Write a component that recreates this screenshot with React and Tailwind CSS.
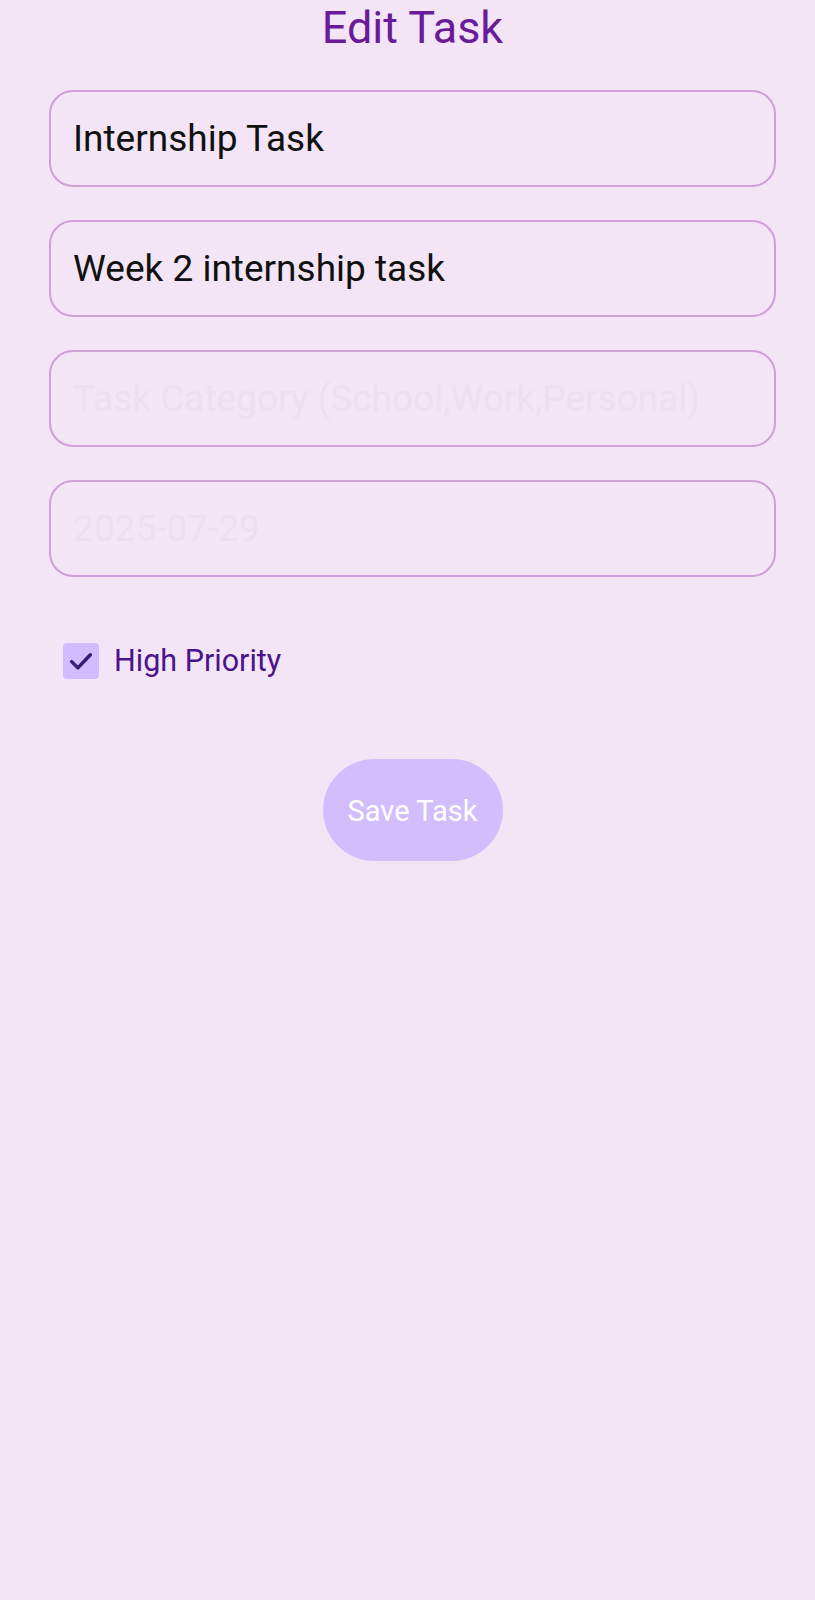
import React from "react";

export default function App() {
  const font = { fontFamily: "Roboto, 'Noto Sans', sans-serif" };
  return (
    <div className="min-h-[1600px] w-full bg-[#f3e5f5]" style={font}>
      <div className="flex flex-col pl-[49px] pr-[39px]">
        <h1 className="mt-[6px] text-center text-[45px] leading-[44px] text-[#6a1b9a]">Edit Task</h1>
        <div className="mt-[40px] flex flex-col gap-[33px]">
          <div className="flex h-[97px] items-center rounded-[24px] border-2 border-[#cf9fd8] px-[22px] text-[37px] text-[#111111]">
            Internship Task
          </div>
          <div className="flex h-[97px] items-center rounded-[24px] border-2 border-[#cf9fd8] px-[22px] text-[37px] text-[#111111]">
            Week 2 internship task
          </div>
          <div className="flex h-[97px] items-center rounded-[24px] border-2 border-[#cf9fd8] px-[22px] text-[37px] text-[#ecdff0] whitespace-nowrap overflow-hidden">
            Task Category (School,Work,Personal)
          </div>
          <div className="flex h-[97px] items-center rounded-[24px] border-2 border-[#cf9fd8] px-[22px] text-[37px] text-[#ecdff0]">
            2025-07-29
          </div>
        </div>
        <div className="mt-[66px] flex items-center gap-[15px] pl-[14px]">
          <div className="flex h-[36px] w-[36px] items-center justify-center rounded-[4px] bg-[#d0bcff]">
            <svg width="30" height="30" viewBox="0 0 24 24" fill="none">
              <path d="M4.5 12.5 L9.5 17.5 L19.5 7" stroke="#381e72" strokeWidth="2.8" strokeLinecap="round" strokeLinejoin="round" />
            </svg>
          </div>
          <span className="text-[30.5px] leading-[36px] text-[#4a148c]">High Priority</span>
        </div>
        <div className="mt-[80px] flex justify-center">
          <button className="flex h-[102px] w-[180px] items-center justify-center rounded-full bg-[#d2befd] pt-[4px] text-[29px] text-white">
            Save Task
          </button>
        </div>
      </div>
    </div>
  );
}
